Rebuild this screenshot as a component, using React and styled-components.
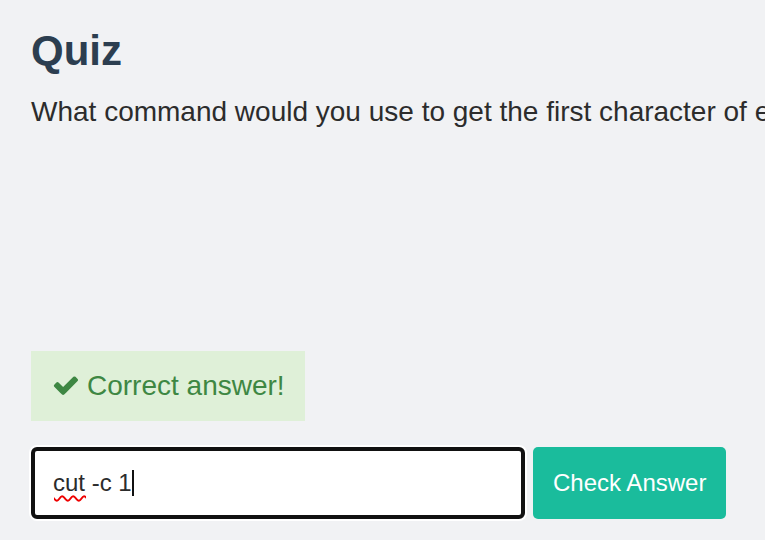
import React, { useState } from 'react';
import styled, { createGlobalStyle } from 'styled-components';

const GlobalStyle = createGlobalStyle`
  html, body {
    margin: 0;
    background: #f1f2f4;
    overflow: hidden;
  }

  body {
    font-family: "Liberation Sans", Arial, sans-serif;
  }
`;

const Page = styled.div`
  padding: 27px 31px;
  white-space: nowrap;
`;

const Title = styled.h1`
  margin: 0;
  font-size: 42px;
  line-height: 48px;
  font-weight: 700;
  color: #2c3e50;
`;

const Question = styled.p`
  margin: 19px 0 0;
  min-height: 257px;
  font-size: 28px;
  line-height: 36px;
  color: #2c2c2c;
`;

const Feedback = styled.div`
  display: inline-flex;
  align-items: center;
  gap: 8px;
  padding: 18px 20px;
  background: #dff0d8;
  color: #3e8743;
  font-size: 28px;
  line-height: 34px;
`;

const Form = styled.form`
  display: flex;
  gap: 8px;
  margin-top: 26px;
`;

const InputWrap = styled.div`
  position: relative;
  width: 494px;
`;

const Input = styled.input`
  box-sizing: border-box;
  width: 100%;
  height: 72px;
  padding: 0 18px;
  border: 4px solid #111;
  border-radius: 6px;
  box-shadow: 0 0 0 2px #fff;
  background: #fff;
  font-family: "Liberation Sans", Arial, sans-serif;
  font-size: 24px;
  color: #2c2c2c;
  outline: none;
`;

const Squiggle = styled.span`
  position: absolute;
  left: 23px;
  top: 22px;
  font-size: 24px;
  line-height: 28px;
  color: transparent;
  text-decoration: underline wavy #e00;
  text-decoration-thickness: 2px;
  text-underline-offset: 4px;
  pointer-events: none;
`;

const Caret = styled.span`
  position: absolute;
  left: 101px;
  top: 23px;
  width: 2px;
  height: 26px;
  background: #111;
`;

const Button = styled.button`
  box-sizing: border-box;
  height: 72px;
  padding: 0 20px;
  border: none;
  border-radius: 5px;
  background: #1abc9c;
  color: #fff;
  font-family: "Liberation Sans", Arial, sans-serif;
  font-size: 24px;
  cursor: pointer;
`;

const CheckIcon = () => (
  <svg width="28" height="24" viewBox="0 0 1792 1536" fill="currentColor">
    <path d="M1671 266q0 40-28 68l-724 724-136 136q-28 28-68 28t-68-28l-136-136-362-362q-28-28-28-68t28-68l136-136q28-28 68-28t68 28l294 295 656-657q28-28 68-28t68 28l136 136q28 28 28 68z" transform="translate(60 120)" />
  </svg>
);

export default function App() {
  const [answer, setAnswer] = useState('cut -c 1');

  return (
    <Page>
      <GlobalStyle />
      <Title>Quiz</Title>
      <Question>What command would you use to get the first character of each line of a file?</Question>
      <Feedback>
        <CheckIcon />
        <span>Correct answer!</span>
      </Feedback>
      <Form onSubmit={(e) => e.preventDefault()}>
        <InputWrap>
          <Input value={answer} onChange={(e) => setAnswer(e.target.value)} spellCheck />
          <Squiggle>cut</Squiggle>
          <Caret />
        </InputWrap>
        <Button type="submit">Check Answer</Button>
      </Form>
    </Page>
  );
}
